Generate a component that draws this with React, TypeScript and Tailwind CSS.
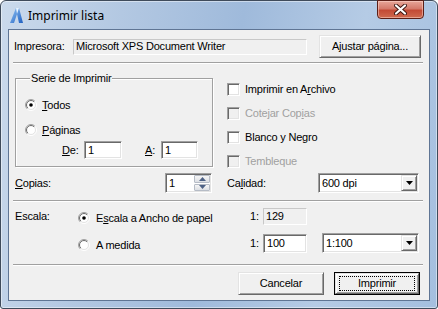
import React from 'react'

const sunken =
  'border border-t-[#a0a0a0] border-l-[#a0a0a0] border-b-white border-r-white shadow-[inset_1px_1px_0_#696969,inset_-1px_-1px_0_#e3e3e3]'
const raised =
  'border border-t-[#e3e3e3] border-l-[#e3e3e3] border-b-[#696969] border-r-[#696969] shadow-[inset_1px_1px_0_#ffffff,inset_-1px_-1px_0_#a0a0a0] bg-[#f0f0f0]'
const readonly = 'border border-[#c8c8c8] border-b-white border-r-white bg-[#f0f0f0]'

function Sep({ className = '' }: { className?: string }) {
  return <div className={'h-[2px] border-t border-t-[#a0a0a0] border-b border-b-white ' + className} />
}

function Radio({ checked }: { checked?: boolean }) {
  return (
    <svg width="12" height="12" viewBox="0 0 12 12" className="shrink-0">
      <defs>
        <linearGradient id="ro" x1="0" y1="0" x2="1" y2="1">
          <stop offset="0.45" stopColor="#a0a0a0" />
          <stop offset="0.55" stopColor="#ffffff" />
        </linearGradient>
        <linearGradient id="ri" x1="0" y1="0" x2="1" y2="1">
          <stop offset="0.45" stopColor="#696969" />
          <stop offset="0.55" stopColor="#e3e3e3" />
        </linearGradient>
      </defs>
      <circle cx="6" cy="6" r="5.5" fill="none" stroke="url(#ro)" />
      <circle cx="6" cy="6" r="4.5" fill="#fff" stroke="url(#ri)" />
      {checked && <circle cx="6" cy="6" r="1.8" fill="#000" />}
    </svg>
  )
}

function Check({ disabled }: { disabled?: boolean }) {
  return <div className={'w-[13px] h-[13px] shrink-0 ' + sunken + (disabled ? ' bg-[#f0f0f0]' : ' bg-white')} />
}

function Arrow({ up, color = '#000' }: { up?: boolean; color?: string }) {
  return (
    <svg width="7" height="4" viewBox="0 0 7 4">
      <polygon points={up ? '3.5,0 7,4 0,4' : '0,0 7,0 3.5,4'} fill={color} />
    </svg>
  )
}

function Select({ value, w }: { value: string; w: string }) {
  return (
    <div className={'h-[20px] flex items-center bg-white ' + sunken + ' ' + w}>
      <span className="flex-1 pl-[3px] leading-none">{value}</span>
      <div className={'w-[16px] h-[16px] mr-[1px] flex items-center justify-center ' + raised}>
        <Arrow />
      </div>
    </div>
  )
}

function Btn({ label, def }: { label: string; def?: boolean }) {
  if (def) {
    return (
      <div className="w-[86px] h-[23px] border border-black">
        <div className={'w-full h-full flex items-center justify-center ' + raised}>
          <div className="w-[76px] h-[15px] border border-dotted border-black flex items-center justify-center">
            {label}
          </div>
        </div>
      </div>
    )
  }
  return <div className={'w-[86px] h-[23px] flex items-center justify-center ' + raised}>{label}</div>
}

export default function App() {
  return (
    <div className="w-[438px] h-[309px] font-['Liberation_Sans',Arial,sans-serif] text-[11px] tracking-[-0.2px] text-black">
      <div className="w-full h-full flex flex-col rounded-t-[6px] rounded-b-[3px] border border-[#3f4b5b] bg-[linear-gradient(100deg,#cbdaec_0%,#b3c8e2_25%,#9fbadb_50%,#b5cbe5_75%,#a4bfdf_100%)] shadow-[inset_0_0_0_1px_rgba(255,255,255,0.45)] px-[7px] pb-[7px]">
        <div className="h-[28px] flex items-start">
          <div className="flex items-center pt-[7px] pl-[2px]">
            <svg width="13" height="15" viewBox="0 0 13 15">
              <defs>
                <linearGradient id="ic" x1="0" y1="0" x2="1" y2="1">
                  <stop offset="0" stopColor="#8fc3f5" />
                  <stop offset="1" stopColor="#1f5fc0" />
                </linearGradient>
              </defs>
              <polygon points="6,0 9,0 13,15 9,15 7,6 4,15 0,15" fill="url(#ic)" />
              <polygon points="6,0 9,0 7,6" fill="#e6f2ff" />
            </svg>
            <span className="ml-[5px] text-[12px] tracking-normal font-['Noto_Sans',sans-serif] leading-none">
              Imprimir lista
            </span>
          </div>
          <div className="ml-auto mr-[6px] w-[47px] h-[19px] -mt-[1px] rounded-b-[4px] border border-[#5b1f17] bg-[linear-gradient(180deg,#e7a699_0%,#d47a6b_45%,#c34a35_55%,#cf6a4f_100%)] shadow-[inset_0_0_0_1px_rgba(255,220,210,0.5)] flex items-center justify-center">
            <svg width="13" height="11" viewBox="0 0 13 11">
              <path d="M2 1.5 L11 9.5 M11 1.5 L2 9.5" stroke="#3b1410" strokeWidth="4" strokeLinecap="round" />
              <path d="M2 1.5 L11 9.5 M11 1.5 L2 9.5" stroke="#fff" strokeWidth="2.2" strokeLinecap="round" />
            </svg>
          </div>
        </div>

        <div className="flex-1 border border-[#5f7594] bg-[#f0f0f0] flex flex-col">
          {/* printer row */}
          <div className="mt-[5px] h-[23px] flex items-center pl-[5px]">
            <span className="w-[59px]">Impresora:</span>
            <div className={'w-[234px] h-[16px] flex items-center pl-[2px] ' + readonly}>Microsoft XPS Document Writer</div>
            <div className={'ml-[12px] w-[102px] h-[23px] flex items-center justify-center ' + raised}>Ajustar página...</div>
          </div>
          <Sep className="mt-[4px] ml-[4px] mr-[6px]" />

          {/* range + options */}
          <div className="h-[109px] flex">
            <fieldset className="ml-[6px] mt-[8px] w-[198px] h-[95px] border border-[#a0a0a0] shadow-[1px_1px_0_#ffffff,inset_1px_1px_0_#ffffff] pl-[9px]">
              <legend className="ml-[5px] px-[1px] bg-[#f0f0f0] leading-[13px]">Serie de Imprimir</legend>
              <div className="mt-[10px] h-[20px] flex items-center">
                <Radio checked />
                <span className="ml-[5px]"><u className="underline-offset-[1px]">T</u>odos</span>
              </div>
              <div className="mt-[5px] h-[20px] flex items-center">
                <Radio />
                <span className="ml-[5px]"><u className="underline-offset-[1px]">P</u>áginas</span>
              </div>
              <div className="mt-[1px] h-[18px] flex items-center">
                <span className="ml-[37px] w-[22px]"><u className="underline-offset-[1px]">D</u>e:</span>
                <div className={'w-[38px] h-[18px] bg-white pl-[3px] flex items-center ' + sunken}>1</div>
                <span className="ml-[23px] w-[16px]"><u className="underline-offset-[1px]">A</u>:</span>
                <div className={'w-[37px] h-[18px] bg-white pl-[3px] flex items-center ' + sunken}>1</div>
              </div>
            </fieldset>
            <div className="ml-[14px] mt-[13px] flex flex-col">
              <div className="h-[24px] flex items-center gap-[5px]">
                <Check />
                <span>Imprimir en A<u className="underline-offset-[1px]">r</u>chivo</span>
              </div>
              <div className="h-[24px] flex items-center gap-[5px] text-[#a0a0a0]">
                <Check disabled />
                <span>Cotejar Cop<u className="underline-offset-[1px]">i</u>as</span>
              </div>
              <div className="h-[24px] flex items-center gap-[5px]">
                <Check />
                <span>Blanco y Negro</span>
              </div>
              <div className="h-[24px] flex items-center gap-[5px] text-[#a0a0a0]">
                <Check disabled />
                <span>Tembleque</span>
              </div>
            </div>
          </div>

          {/* copies / quality */}
          <div className="h-[20px] flex items-center">
            <span className="ml-[6px] w-[150px]"><u className="underline-offset-[1px]">C</u>opias:</span>
            <div className={'w-[47px] h-[20px] flex bg-white ' + sunken}>
              <span className="flex-1 pl-[3px] flex items-center">1</span>
              <div className="w-[17px] flex flex-col gap-[1px] p-[1px] pl-0">
                <div className="flex-1 border border-[#b6bcc6] bg-[linear-gradient(180deg,#f6f6f6,#dcdfe4)] rounded-[1px] flex items-center justify-center">
                  <Arrow up color="#4d6185" />
                </div>
                <div className="flex-1 border border-[#b6bcc6] bg-[linear-gradient(180deg,#f6f6f6,#dcdfe4)] rounded-[1px] flex items-center justify-center">
                  <Arrow color="#4d6185" />
                </div>
              </div>
            </div>
            <span className="ml-[15px] w-[91px]">Ca<u className="underline-offset-[1px]">l</u>idad:</span>
            <Select value="600 dpi" w="w-[101px]" />
          </div>
          <Sep className="mt-[7px] ml-[4px] mr-[6px]" />

          {/* scale */}
          <div className="mt-[5px] h-[19px] flex items-center">
            <span className="ml-[6px] w-[63px]">Escala:</span>
            <div className="w-[170px] flex items-center pt-[3px]">
              <Radio checked />
              <span className="ml-[6px]">E<u className="underline-offset-[1px]">s</u>cala a Ancho de papel</span>
            </div>
            <span className="ml-[2px] w-[13px]">1:</span>
            <div className={'w-[44px] h-[17px] flex items-center pl-[2px] ' + readonly}>129</div>
          </div>
          <div className="mt-[7px] h-[20px] flex items-center">
            <div className="ml-[69px] w-[170px] flex items-center pt-[4px]">
              <Radio />
              <span className="ml-[6px]">A medida</span>
            </div>
            <span className="ml-[2px] w-[13px]">1:</span>
            <div className={'w-[44px] h-[19px] bg-white pl-[3px] flex items-center ' + sunken}>100</div>
            <div className="ml-[15px]">
              <Select value="1:100" w="w-[97px]" />
            </div>
          </div>
          <Sep className="mt-[11px] ml-[4px] mr-[6px]" />

          {/* buttons */}
          <div className="mt-[6px] flex justify-end gap-[10px] mr-[9px]">
            <Btn label="Cancelar" />
            <Btn label="Imprimir" def />
          </div>
        </div>
      </div>
    </div>
  )
}
